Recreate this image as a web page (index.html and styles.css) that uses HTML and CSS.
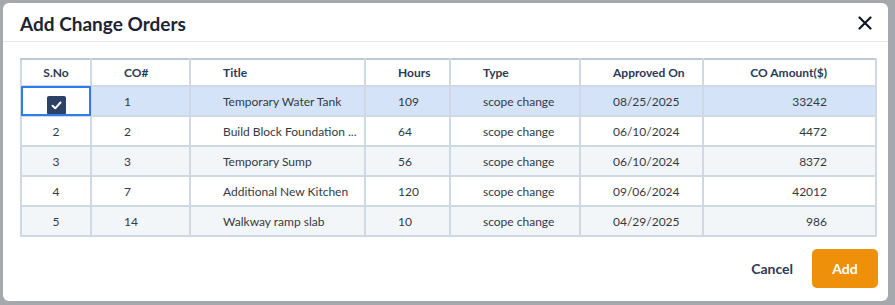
FILE: index.html
```html
<!DOCTYPE html>
<html lang="en">
<head>
    <meta charset="UTF-8">
    <meta name="viewport" content="width=device-width, initial-scale=1.0">
    <title>Add Change Orders</title>
    <link rel="stylesheet" href="styles.css">
</head>
<body>
    <div class="overlay">
        <div class="dialog">
            <div class="dialog-header">
                <h2>Add Change Orders</h2>
                <button class="close-btn" aria-label="Close">
                    <svg width="14" height="14" viewBox="0 0 14 14">
                        <path d="M1.5 1.5 L12.5 12.5 M12.5 1.5 L1.5 12.5" stroke="#111827" stroke-width="2.2" stroke-linecap="round"/>
                    </svg>
                </button>
            </div>
            <div class="dialog-body">
                <table class="co-table">
                    <thead>
                        <tr>
                            <th class="col-sno">S.No</th>
                            <th class="col-co">CO#</th>
                            <th class="col-title">Title</th>
                            <th class="col-hours">Hours</th>
                            <th class="col-type">Type</th>
                            <th class="col-date">Approved On</th>
                            <th class="col-amount">CO Amount($)</th>
                        </tr>
                    </thead>
                    <tbody>
                        <tr class="selected">
                            <td class="col-sno focused"><span class="checkbox"><svg width="11" height="9" viewBox="0 0 11 9"><path d="M1.5 4.8 L4.2 7.3 L9.5 1.5" stroke="#fff" stroke-width="2" fill="none" stroke-linecap="round" stroke-linejoin="round"/></svg></span></td>
                            <td>1</td>
                            <td>Temporary Water Tank</td>
                            <td>109</td>
                            <td>scope change</td>
                            <td>08/25/2025</td>
                            <td class="col-amount">33242</td>
                        </tr>
                        <tr>
                            <td class="col-sno">2</td>
                            <td>2</td>
                            <td>Build Block Foundation ...</td>
                            <td>64</td>
                            <td>scope change</td>
                            <td>06/10/2024</td>
                            <td class="col-amount">4472</td>
                        </tr>
                        <tr>
                            <td class="col-sno">3</td>
                            <td>3</td>
                            <td>Temporary Sump</td>
                            <td>56</td>
                            <td>scope change</td>
                            <td>06/10/2024</td>
                            <td class="col-amount">8372</td>
                        </tr>
                        <tr>
                            <td class="col-sno">4</td>
                            <td>7</td>
                            <td>Additional New Kitchen</td>
                            <td>120</td>
                            <td>scope change</td>
                            <td>09/06/2024</td>
                            <td class="col-amount">42012</td>
                        </tr>
                        <tr>
                            <td class="col-sno">5</td>
                            <td>14</td>
                            <td>Walkway ramp slab</td>
                            <td>10</td>
                            <td>scope change</td>
                            <td>04/29/2025</td>
                            <td class="col-amount">986</td>
                        </tr>
                    </tbody>
                </table>
            </div>
            <div class="dialog-footer">
                <button class="btn-cancel">Cancel</button>
                <button class="btn-add">Add</button>
            </div>
        </div>
    </div>
</body>
</html>
```

FILE: styles.css
```css
html, body {
    margin: 0;
    padding: 0;
}
body {
    font-family: Lato, "Open Sans", sans-serif;
    background-color: #a5a8ac;
    width: 895px;
    height: 305px;
    overflow: hidden;
}
.overlay {
    padding: 3px 0 0 3px;
}
.dialog {
    width: 885px;
    height: 298px;
    background-color: #fff;
    border-radius: 6px;
    box-sizing: border-box;
    display: flex;
    flex-direction: column;
}
.dialog-header {
    height: 38px;
    border-bottom: 1px solid #e6e9ed;
    display: flex;
    align-items: center;
    justify-content: space-between;
    padding: 0 15px 0 17px;
}
.dialog-header h2 {
    margin: 0;
    font-size: 19px;
    font-weight: 700;
    color: #1c2434;
    position: relative;
    top: 1px;
}
.close-btn {
    border: none;
    background: none;
    padding: 0;
    width: 16px;
    height: 16px;
    display: flex;
    align-items: center;
    justify-content: center;
    cursor: pointer;
    position: relative;
    top: 1px;
}
.dialog-body {
    padding: 16px 8px 0 17px;
}
.co-table {
    border-collapse: collapse;
    table-layout: fixed;
    width: 857px;
    font-size: 12px;
    color: #333a44;
}
.co-table th,
.co-table td {
    box-sizing: border-box;
    border: 2px solid #cfd9e3;
    padding: 0 0 0 32px;
    text-align: left;
    white-space: nowrap;
    overflow: hidden;
}
.co-table th {
    height: 27px;
    font-weight: 700;
    color: #2b3a55;
    background-color: #fff;
    border-top-color: #bccad8;
}
.co-table td {
    height: 30px;
}
.co-table tbody tr:nth-child(odd) {
    background-color: #f3f6f9;
}
.co-table tbody tr:nth-child(even) {
    background-color: #fff;
}
.co-table tbody tr.selected {
    background-color: #d5e3f8;
}
.col-sno { width: 70px; }
.col-co { width: 99px; }
.col-title { width: 175px; }
.col-hours { width: 85px; }
.col-type { width: 130px; }
.col-date { width: 123px; }
.co-table .col-sno {
    text-align: center;
    padding: 0;
}
.co-table .col-amount {
    text-align: right;
    padding: 0 48px 0 0;
}
.co-table td.focused {
    background-color: #fff;
    outline: 2px solid #2f7be8;
    outline-offset: -2px;
    vertical-align: bottom;
    padding-top: 3px;
}
.checkbox {
    display: inline-flex;
    align-items: center;
    justify-content: center;
    width: 19px;
    height: 19px;
    background-color: #2c4166;
    border-radius: 2px;
    vertical-align: bottom;
    margin-bottom: 0;
}
.dialog-footer {
    margin-top: auto;
    display: flex;
    justify-content: flex-end;
    align-items: center;
    gap: 19px;
    padding: 0 10px 13px 0;
}
.btn-cancel {
    border: none;
    background: none;
    font-family: inherit;
    font-size: 14px;
    font-weight: 700;
    color: #2b3a55;
    padding: 0;
    cursor: pointer;
}
.btn-add {
    border: none;
    background-color: #ef900b;
    color: #fff;
    font-family: inherit;
    font-size: 14px;
    font-weight: 700;
    width: 66px;
    height: 39px;
    border-radius: 5px;
    cursor: pointer;
}
```
